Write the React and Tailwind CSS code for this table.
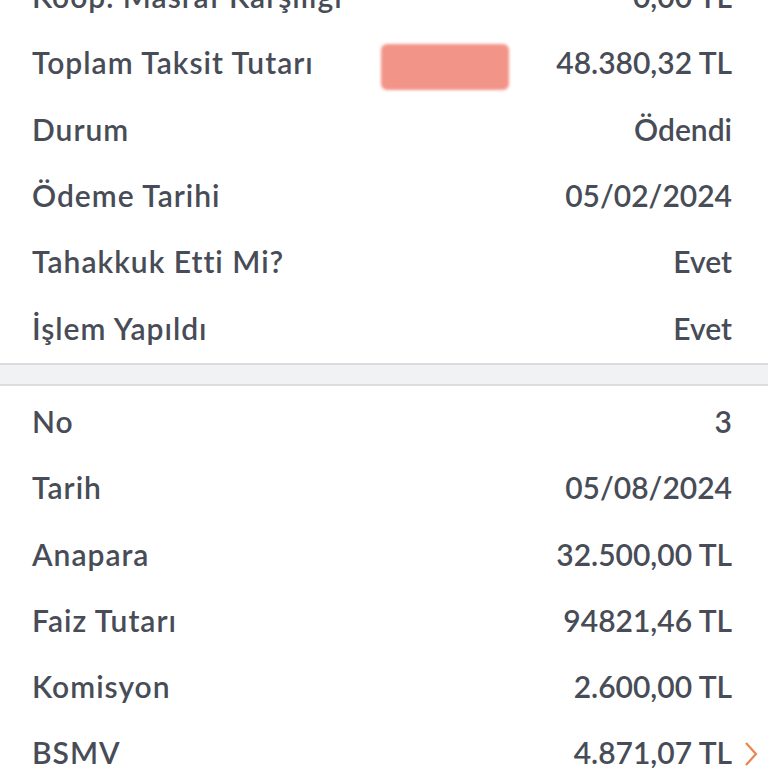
import React from "react";

const rows1 = [
  ["Koop. Masraf Karşılığı", "0,00 TL"],
  ["Toplam Taksit Tutarı", "48.380,32 TL", true],
  ["Durum", "Ödendi"],
  ["Ödeme Tarihi", "05/02/2024"],
  ["Tahakkuk Etti Mi?", "Evet"],
  ["İşlem Yapıldı", "Evet"],
];
const rows2 = [
  ["No", "3"],
  ["Tarih", "05/08/2024"],
  ["Anapara", "32.500,00 TL"],
  ["Faiz Tutarı", "94821,46 TL"],
  ["Komisyon", "2.600,00 TL"],
  ["BSMV", "4.871,07 TL", false, true],
];

function Row({ label, value, redact, chevron }) {
  return (
    <div className="relative flex h-[66.3px] items-center justify-between pb-[3px] pl-[32px] pr-[36px]">
      <span className="tracking-[1px]">{label}</span>
      {redact && (
        <div className="absolute left-[381px] top-[13px] h-[46px] w-[128px] rounded-[6px] bg-[#f39488] blur-[1.5px]" />
      )}
      <span>{value}</span>
      {chevron && (
        <svg className="absolute right-[10px] top-[20px]" width="14" height="26" viewBox="0 0 14 26" fill="none">
          <path d="M2 2 L12 13 L2 24" stroke="#e9864f" strokeWidth="2.2" />
        </svg>
      )}
    </div>
  );
}

export default function App() {
  return (
    <div
      className="h-[768px] w-[768px] overflow-hidden bg-white text-[30px] font-semibold text-[#474c57]"
      style={{ fontFamily: "Lato, 'Open Sans', sans-serif" }}
    >
      <div className="mt-[-35px]">
        {rows1.map((r, i) => (
          <Row key={i} label={r[0]} value={r[1]} redact={r[2]} />
        ))}
      </div>
      <div className="h-[23px] border-y-2 border-[#dcdcde] bg-[#f1f2f4]" />
      <div className="pt-[4px]">
        {rows2.map((r, i) => (
          <Row key={i} label={r[0]} value={r[1]} chevron={r[3]} />
        ))}
      </div>
    </div>
  );
}
